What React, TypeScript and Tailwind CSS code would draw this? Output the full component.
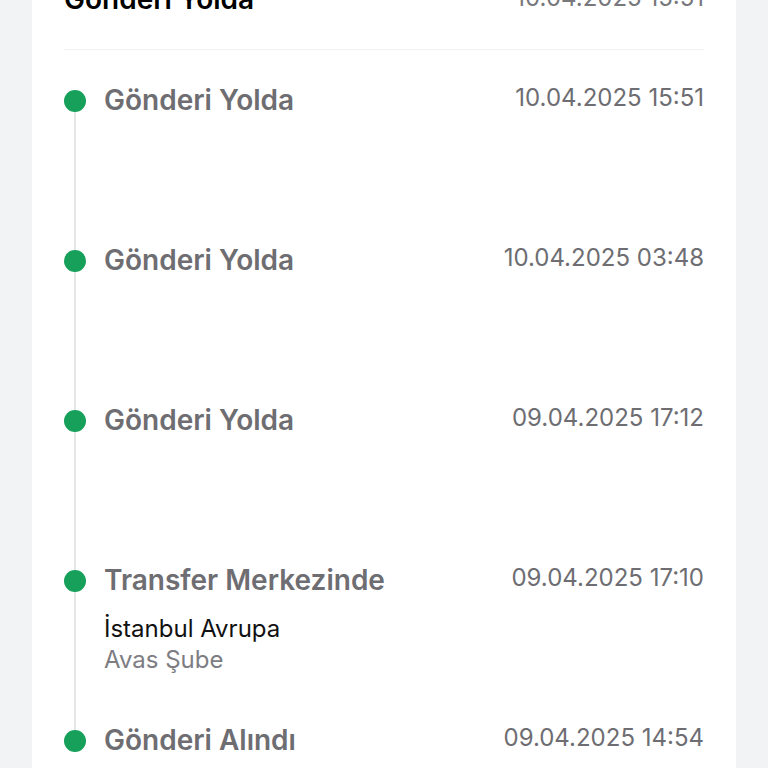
const events = [
  { title: "Gönderi Yolda", date: "10.04.2025 15:51" },
  { title: "Gönderi Yolda", date: "10.04.2025 03:48" },
  { title: "Gönderi Yolda", date: "09.04.2025 17:12" },
  {
    title: "Transfer Merkezinde",
    date: "09.04.2025 17:10",
    place: "İstanbul Avrupa",
    branch: "Avas Şube",
  },
  { title: "Gönderi Alındı", date: "09.04.2025 14:54" },
];

export default function App() {
  return (
    <div
      className="h-[768px] overflow-hidden bg-[#f2f3f5]"
      style={{ fontFamily: "Inter, 'Noto Sans', sans-serif" }}
    >
      <div className="mx-8 -mt-[17px] bg-white px-8">
        {/* Header */}
        <div className="flex items-start justify-between border-b border-[#f0f0f2] pb-[34px]">
          <span className="text-[28px] font-semibold leading-[32px] text-black">Gönderi Yolda</span>
          <span className="text-[24px] leading-[30px] text-[#77777c]">10.04.2025 15:51</span>
        </div>

        {/* Timeline */}
        <div className="pt-[34px]">
          {events.map((event, i) => (
            <div key={i} className="flex h-[160px] gap-[18px]">
              <div className="flex w-[22px] flex-col items-center">
                <div className={i === 0 ? "h-[6px]" : "h-[6px] w-0.5 bg-[#e6e6e8]"} />
                <div className="h-[22px] w-[22px] rounded-full bg-[#16a05a]" />
                {i < events.length - 1 && <div className="w-0.5 flex-1 bg-[#e6e6e8]" />}
              </div>
              <div className="flex-1">
                <div className="flex items-start justify-between">
                  <span className="text-[28px] font-semibold leading-[32px] text-[#6d6d72]">
                    {event.title}
                  </span>
                  <span className="text-[24px] leading-[28px] text-[#6d6d72]">{event.date}</span>
                </div>
                {event.place && (
                  <div className="mt-[17px] text-[24px] leading-[31px]">
                    <div className="text-[#111]">{event.place}</div>
                    <div className="text-[#7d7d82]">{event.branch}</div>
                  </div>
                )}
              </div>
            </div>
          ))}
        </div>
      </div>
    </div>
  );
}
